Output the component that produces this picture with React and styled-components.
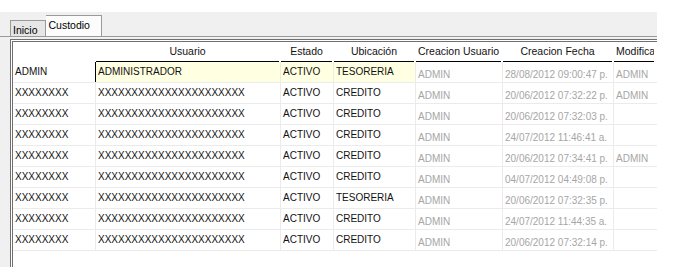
import React from 'react';
import styled, { createGlobalStyle } from "styled-components";

const GlobalStyle = createGlobalStyle`
  body {
    margin: 0;
    background: #ffffff;
    font-family: "Liberation Sans", Arial, sans-serif;
  }
`;

const X8 = 'XXXXXXXX';
const X22 = 'XXXXXXXXXXXXXXXXXXXXXX';

const columns = [
    { title: '', width: 82, align: 'left' },
    { title: 'Usuario', width: 185, align: 'center' },
    { title: 'Estado', width: 53, align: 'center' },
    { title: 'Ubicación', width: 82, align: 'center' },
    { title: 'Creacion Usuario', width: 87, align: 'center' },
    { title: 'Creacion Fecha', width: 111, align: 'center' },
    { title: 'Modifica', width: 42, align: 'left' },
];

const rows = [
    ['ADMIN', 'ADMINISTRADOR', 'ACTIVO', 'TESORERIA', 'ADMIN', '28/08/2012 09:00:47 p.', 'ADMIN'],
    [X8, X22, 'ACTIVO', 'CREDITO', 'ADMIN', '20/06/2012 07:32:22 p.', 'ADMIN'],
    [X8, X22, 'ACTIVO', 'CREDITO', 'ADMIN', '20/06/2012 07:32:03 p.', ''],
    [X8, X22, 'ACTIVO', 'CREDITO', 'ADMIN', '24/07/2012 11:46:41 a.', ''],
    [X8, X22, 'ACTIVO', 'CREDITO', 'ADMIN', '20/06/2012 07:34:41 p.', 'ADMIN'],
    [X8, X22, 'ACTIVO', 'CREDITO', 'ADMIN', '04/07/2012 04:49:08 p.', ''],
    [X8, X22, 'ACTIVO', 'TESORERIA', 'ADMIN', '20/06/2012 07:32:35 p.', ''],
    [X8, X22, 'ACTIVO', 'CREDITO', 'ADMIN', '24/07/2012 11:44:35 a.', ''],
    [X8, X22, 'ACTIVO', 'CREDITO', 'ADMIN', '20/06/2012 07:32:14 p.', ''],
];

const template = columns.map(c => c.width + 'px').join(' ');

const App = () => {
    return (
        <Page>
            <GlobalStyle />
            <Panel>
                <TabStrip>
                    <Tab>Inicio</Tab>
                    <Tab active>Custodio</Tab>
                </TabStrip>
                <Frame>
                    <HeaderRow>
                        {columns.map((c, i) => (
                            <HeaderCell key={i} align={c.align} blank={!c.title}>
                                {c.title}
                            </HeaderCell>
                        ))}
                    </HeaderRow>
                    {rows.map((r, ri) => (
                        <Row key={ri}>
                            {r.map((v, ci) => (
                                <Cell
                                    key={ci}
                                    muted={ci >= 4}
                                    selected={ri === 0 && ci >= 1 && ci <= 3}
                                    cursor={ri === 0 && ci === 1}
                                >
                                    {v}
                                </Cell>
                            ))}
                        </Row>
                    ))}
                </Frame>
            </Panel>
        </Page>
    );
};

export default App;

const Page = styled.div`
  padding-top: 12px;
  width: 678px;
  height: 273px;
  box-sizing: border-box;
`;

const Panel = styled.div`
  width: 657px;
  background: #f0f0f0;
  padding-top: 3px;
`;

const TabStrip = styled.div`
  display: flex;
  align-items: flex-end;
  height: 21px;
  padding-left: 10px;
  border-bottom: 1px solid #9a9a9a;
`;

const Tab = styled.div`
  box-sizing: border-box;
  height: ${p => p.active ? '21px' : '16px'};
  padding: ${p => p.active ? '3px 11px 0 3px' : '3px 7px 0 2px'};
  background: ${p => p.active ? '#fcfcfc' : '#e6e6e6'};
  border: 1px solid #9a9a9a;
  border-bottom: none;
  border-left: ${p => p.active ? 'none' : '1px solid #9a9a9a'};
  font-size: 10.5px;
  line-height: 12px;
  color: #000;
`;

const Frame = styled.div`
  margin: 2px 0 0 10px;
  height: 225px;
  background: #ffffff;
  border-top: 3px double #707070;
  border-left: 3px double #707070;
  overflow: hidden;
`;

const HeaderRow = styled.div`
  display: grid;
  grid-template-columns: ${template};
  height: 20px;
`;

const HeaderCell = styled.div`
  margin: 0 1px;
  padding: 0 2px;
  border-bottom: ${p => p.blank ? 'none' : '1px solid #000'};
  text-align: ${p => p.align};
  font-size: 10.5px;
  line-height: 19px;
  color: #111;
  white-space: nowrap;
  overflow: hidden;
`;

const Row = styled.div`
  display: grid;
  grid-template-columns: ${template};
  height: 21px;
  box-sizing: border-box;
  border-bottom: 1px solid #ebebeb;
`;

const Cell = styled.div`
  padding: ${p => p.muted ? '3px 0 0 2px' : '0 0 0 2px'};
  background: ${p => p.selected ? '#ffffe1' : 'transparent'};
  border-left: 1px solid ${p => p.cursor ? '#000' : '#ebebeb'};
  font-size: 10px;
  line-height: 20px;
  color: ${p => p.muted ? '#a6a6a6' : '#111'};
  white-space: nowrap;
  overflow: hidden;
  &:first-child {
    border-left: none;
  }
`;
